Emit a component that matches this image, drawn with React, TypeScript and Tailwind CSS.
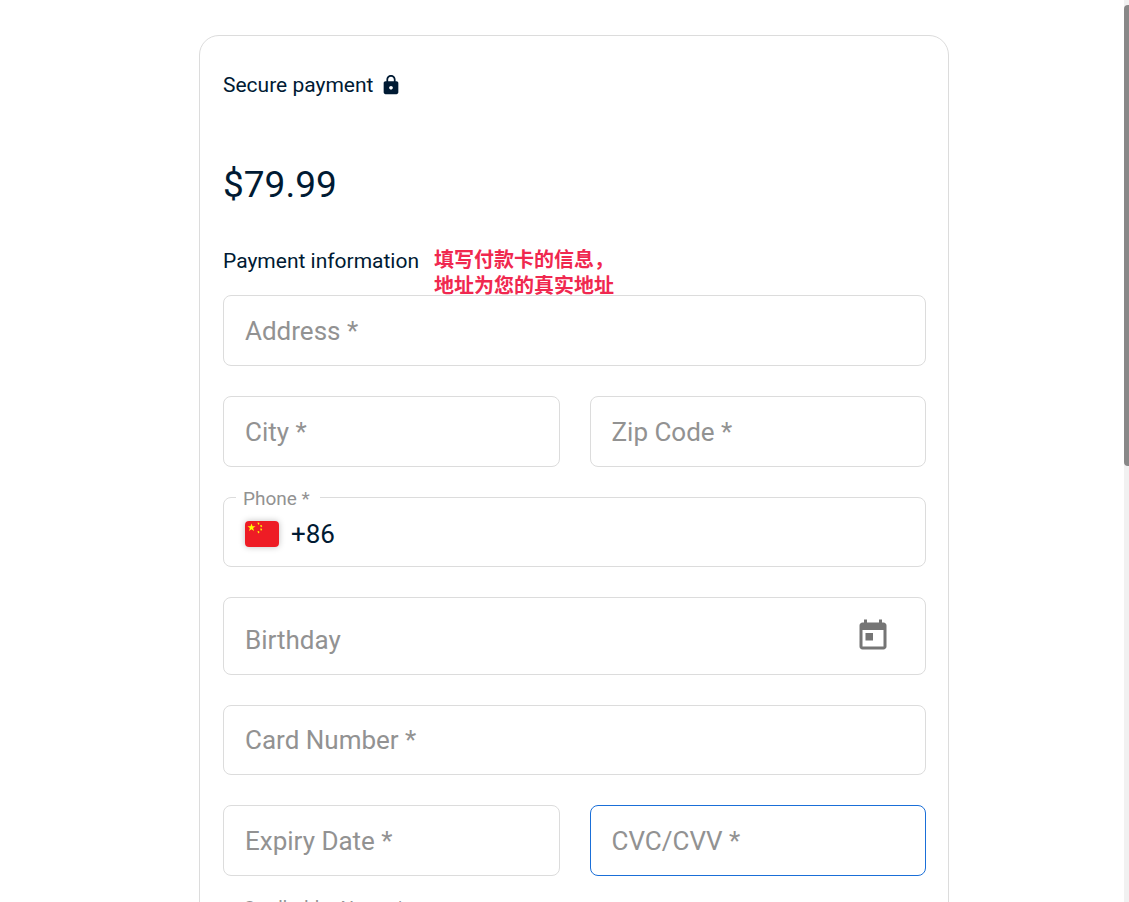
import type { InputHTMLAttributes, ReactNode } from "react";

const LockIcon = () => (
  <svg viewBox="0 0 24 24" className="h-[22px] w-[22px] fill-current" aria-hidden="true">
    <path d="M18 8h-1V6c0-2.760-2.240-5-5-5S7 3.240 7 6v2H6c-1.100 0-2 .9-2 2v10c0 1.100.9 2 2 2h12c1.100 0 2-.9 2-2V10c0-1.100-.9-2-2-2zm-6 9c-1.100 0-2-.9-2-2s.9-2 2-2 2 .9 2 2-.9 2-2 2zm3.100-9H8.900V6c0-1.710 1.390-3.100 3.100-3.100 1.710 0 3.100 1.390 3.100 3.100v2z" />
  </svg>
);

const CalendarIcon = () => (
  <svg viewBox="0 0 24 24" className="h-9 w-9 fill-current" aria-hidden="true">
    <path d="M19 3h-1V1h-2v2H8V1H6v2H5c-1.110 0-1.990.9-1.990 2L3 19c0 1.100.89 2 2 2h14c1.100 0 2-.9 2-2V5c0-1.100-.9-2-2-2zm0 16H5V8h14v11zM7 10h5v5H7z" />
  </svg>
);

const ChinaFlag = () => (
  <svg
    viewBox="0 0 34 26"
    className="h-[26px] w-[34px] rounded shadow-[0_0_6px_rgba(0,0,0,0.25)]"
    aria-hidden="true"
  >
    <rect width="34" height="26" fill="#ee1c25" />
    <g fill="#ffff00">
      <path d="M6.500 2.500l1 2.800h3l-2.400 1.800.9 2.900-2.500-1.700L4 10l.9-2.900-2.400-1.800h3z" />
      <path d="M12.500 1.500l.9.300.8-.4-.1 1 .6.700-.9.100-.5.900-.4-1z" />
      <path d="M15.200 4l.9.300.8-.4-.1 1 .6.700-.9.100-.5.900-.4-1z" />
      <path d="M15.200 7.500l.9.300.8-.4-.1 1 .6.700-.9.100-.5.900-.4-1z" />
      <path d="M12.500 10l.9.300.8-.4-.1 1 .6.700-.9.100-.5.900-.4-1z" />
    </g>
  </svg>
);

type FieldProps = InputHTMLAttributes<HTMLInputElement> & { label: string };

function Field({ label, className = "h-[71px] border-[#dcdcdc]", ...rest }: FieldProps) {
  return (
    <input
      aria-label={label}
      placeholder={label}
      className={`block w-full min-w-0 rounded-lg border bg-white px-[21px] text-[26px] text-[#001a33] outline-none placeholder:text-[#929292] placeholder:opacity-100 ${className}`}
      {...rest}
    />
  );
}

// the label sits in a notch of the outline
function OutlinedField({ id, label, children }: { id: string; label: string; children: ReactNode }) {
  return (
    <fieldset className="-mt-3.5 h-[84px] rounded-lg border border-[#dcdcdc] px-3">
      <legend className="pt-1 pr-2.5 pl-[7px] text-[19px] leading-6 text-[#929292]">
        <label htmlFor={id}>{label}</label>
      </legend>
      <div className="flex h-[46px] items-center gap-3 px-[9px]">{children}</div>
    </fieldset>
  );
}

export default function App() {
  return (
    <div className="flex h-screen overflow-hidden bg-white font-['Roboto','Noto_Sans_CJK_SC',sans-serif] text-[#001a33]">
      <main className="min-w-0 flex-1 overflow-y-auto pt-[35px] pl-6 [scrollbar-width:none]">
        <form className="mx-auto max-w-[750px] rounded-[20px] border border-[#dcdcdc] pt-[35px] pr-[22px] pb-10 pl-[23px]">
          <h1 className="flex items-center gap-[7px] text-[21px] leading-7">
            Secure payment
            <LockIcon />
          </h1>
          <p className="mt-16 text-[37px] leading-[44px]">$79.99</p>

          <div className="mt-10 flex h-12 gap-[15px]">
            <h2 className="text-[21px] leading-7">Payment information</h2>
            <p className="text-xl leading-[26px] font-bold text-[#f0284f]">
              填写付款卡的信息，
              <br />
              地址为您的真实地址
            </p>
          </div>

          <div className="flex flex-col gap-[30px]">
            <Field label="Address *" />
            <div className="grid grid-cols-2 gap-[30px]">
              <Field label="City *" />
              <Field label="Zip Code *" />
            </div>

            <OutlinedField id="phone" label="Phone *">
              <ChinaFlag />
              <input id="phone" type="tel" defaultValue="+86" className="h-full min-w-0 flex-1 text-[26px] outline-none" />
            </OutlinedField>

            <div className="flex h-[78px] items-center rounded-lg border border-[#dcdcdc] pr-[34px] pl-[21px]">
              <input
                aria-label="Birthday"
                placeholder="Birthday"
                className="h-full min-w-0 flex-1 pt-2 text-[26px] outline-none placeholder:text-[#929292] placeholder:opacity-100"
              />
              <button type="button" aria-label="Choose date" className="text-[#757575]">
                <CalendarIcon />
              </button>
            </div>

            <Field label="Card Number *" inputMode="numeric" className="h-[70px] border-[#dcdcdc]" />
            <div className="grid grid-cols-2 gap-[30px]">
              <Field label="Expiry Date *" />
              <Field label="CVC/CVV *" className="h-[71px] border-[#1a6fd8]" />
            </div>

            <OutlinedField id="cardholder" label="Cardholder Name *">
              <input id="cardholder" type="text" className="h-full min-w-0 flex-1 text-[26px] outline-none" />
            </OutlinedField>
          </div>
        </form>
      </main>
      <div className="w-[5px] bg-[#f1f1f1] pt-[5px]">
        <div className="h-[461px] rounded-l bg-[#888888]" />
      </div>
    </div>
  );
}
